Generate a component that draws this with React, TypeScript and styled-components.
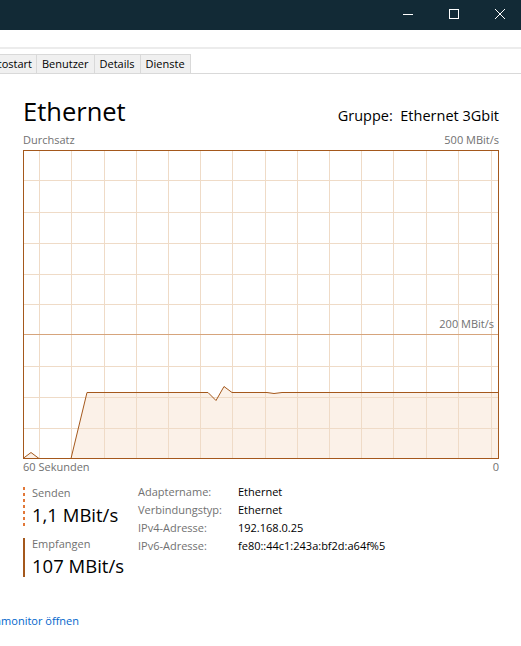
import React from "react";
import styled, { createGlobalStyle } from "styled-components";

const GlobalStyle = createGlobalStyle`
  html, body { margin: 0; padding: 0; background: #ffffff; }
  body {
    font-family: "Open Sans", "Noto Sans", sans-serif;
    overflow: hidden;
    width: 521px;
    height: 646px;
  }
  #root { width: 521px; height: 646px; }
`;

const LABEL = "#717171";
const BROWN = "#a4581c";
const GRID = "#efdbc7";

const Window = styled.div`
  width: 521px;
  height: 646px;
  display: flex;
  flex-direction: column;
  background: #ffffff;
  overflow: hidden;
`;

const TitleBar = styled.div`
  height: 30px;
  flex-shrink: 0;
  background: #122a36;
  display: flex;
  justify-content: flex-end;
`;

const Controls = styled.div`
  display: flex;
  margin-right: -2px;
`;

const CtrlButton = styled.div`
  width: 46px;
  height: 30px;
  display: flex;
  align-items: center;
  justify-content: center;
  svg { display: block; margin-bottom: 2px; }
`;

const MenuSpace = styled.div`
  height: 17px;
  flex-shrink: 0;
`;

const Separator = styled.div`
  height: 2px;
  flex-shrink: 0;
  background: #ececec;
  margin-bottom: 5px;
`;

const TabRow = styled.div`
  height: 20px;
  flex-shrink: 0;
  box-sizing: border-box;
  border-bottom: 1px solid #d9d9d9;
  display: flex;
`;

const ClipStart = styled.div<{ $w: number }>`
  width: ${(p) => p.$w}px;
  flex-shrink: 0;
  display: flex;
  justify-content: flex-end;
  white-space: nowrap;
`;

const Tab = styled.div<{ $pr?: number }>`
  height: 19px;
  box-sizing: border-box;
  flex-shrink: 0;
  background: #f0f0f0;
  border-top: 1px solid #d9d9d9;
  border-right: 1px solid #d9d9d9;
  padding: 0 ${(p) => p.$pr ?? 5}px 0 5px;
  font-size: 11px;
  line-height: 18px;
  color: #000;
  white-space: nowrap;
`;

const Content = styled.div`
  padding: 0 22px 0 23px;
  display: flex;
  flex-direction: column;
`;

const Header = styled.div`
  margin-top: 19px;
  height: 36px;
  display: flex;
  justify-content: space-between;
  align-items: baseline;
`;

const Title = styled.div`
  font-size: 25.5px;
  line-height: 36px;
  font-weight: 400;
  color: #000;
`;

const Group = styled.div`
  font-size: 14.5px;
  line-height: 20px;
  color: #000;
  white-space: pre;
`;

const AxisRow = styled.div<{ $top: number; $lh: number }>`
  margin-top: ${(p) => p.$top}px;
  display: flex;
  justify-content: space-between;
  font-size: 11px;
  line-height: ${(p) => p.$lh}px;
  color: ${LABEL};
`;

const Chart = styled.div`
  margin-top: 4px;
  position: relative;
  height: 309px;
  svg { display: block; }
`;

const ChartLabel = styled.span`
  position: absolute;
  right: 5px;
  top: 168px;
  font-size: 11px;
  line-height: 12px;
  color: ${LABEL};
`;

const Info = styled.div`
  margin-top: 9px;
  display: flex;
`;

const Stats = styled.div`
  width: 115px;
  flex-shrink: 0;
  padding-top: 4px;
  display: flex;
  flex-direction: column;
  gap: 12px;
`;

const StatBlock = styled.div<{ $dotted?: boolean }>`
  padding-left: 9px;
  ${(p) =>
    p.$dotted
      ? `background: repeating-linear-gradient(to bottom, #e27838 0 3px, transparent 3px 6px) left top / 2px 100% no-repeat;`
      : `border-left: 2px solid ${BROWN}; padding-left: 7px;`}
`;

const StatLabel = styled.div`
  font-size: 11px;
  line-height: 12px;
  color: ${LABEL};
`;

const StatValue = styled.div`
  margin-top: 5px;
  font-size: 18.5px;
  line-height: 22px;
  color: #000;
  white-space: nowrap;
`;

const Details = styled.div`
  display: grid;
  grid-template-columns: 100px auto;
  grid-auto-rows: 18px;
  font-size: 11px;
  line-height: 18px;
`;

const DLabel = styled.div`
  color: ${LABEL};
  white-space: nowrap;
`;

const DValue = styled.div`
  color: #000;
  white-space: nowrap;
`;

const LinkRow = styled.div`
  margin-top: 37px;
  width: 79px;
  display: flex;
  justify-content: flex-end;
  white-space: nowrap;
`;

const Link = styled.a`
  font-size: 11px;
  line-height: 14px;
  color: #0066cc;
  text-decoration: none;
  cursor: pointer;
`;

const vLines = [16, 48, 81, 113, 145, 177, 209, 242, 274, 306, 338, 370, 403, 435, 468];
const hLines = [30, 62, 93, 124, 154, 216, 247, 278];
const data: [number, number][] = [
  [0, 308], [8, 302], [16, 308], [48, 308], [64, 242], [185, 242], [193, 250],
  [201, 236], [209, 242], [244, 242], [251, 243], [259, 242], [476, 242],
];

const ThroughputChart: React.FC = () => {
  const pts = data.map(([x, y]) => `${x},${y + 0.5}`).join(" ");
  const fillPts = `${pts} 476,308 0,308`;
  return (
    <svg width={476} height={309} viewBox="0 0 476 309">
      <polygon points={fillPts} fill="#fbf1e8" />
      {vLines.map((x) => (
        <line key={"v" + x} x1={x + 0.5} y1={0} x2={x + 0.5} y2={309} stroke={GRID} strokeWidth={1} />
      ))}
      {hLines.map((y) => (
        <line key={"h" + y} x1={0} y1={y + 0.5} x2={476} y2={y + 0.5} stroke={GRID} strokeWidth={1} />
      ))}
      <line x1={0} y1={184.5} x2={476} y2={184.5} stroke="#d6a47c" strokeWidth={1} />
      <polyline points={pts} fill="none" stroke={BROWN} strokeWidth={1} />
      <rect x={0.5} y={0.5} width={475} height={308} fill="none" stroke={BROWN} strokeWidth={1} />
    </svg>
  );
};

export default function App() {
  return (
    <Window>
      <GlobalStyle />
      <TitleBar>
        <Controls>
          <CtrlButton>
            <svg width="10" height="10" viewBox="0 0 10 10">
              <line x1="0" y1="5.5" x2="10" y2="5.5" stroke="#fff" strokeWidth="1" />
            </svg>
          </CtrlButton>
          <CtrlButton>
            <svg width="10" height="10" viewBox="0 0 10 10">
              <rect x="0.5" y="0.5" width="9" height="9" fill="none" stroke="#fff" strokeWidth="1" />
            </svg>
          </CtrlButton>
          <CtrlButton>
            <svg width="10" height="10" viewBox="0 0 10 10">
              <path d="M0 0 L10 10 M10 0 L0 10" stroke="#fff" strokeWidth="1" />
            </svg>
          </CtrlButton>
        </Controls>
      </TitleBar>
      <MenuSpace />
      <Separator />
      <TabRow>
        <ClipStart $w={37}>
          <Tab $pr={4}>Autostart</Tab>
        </ClipStart>
        <Tab>Benutzer</Tab>
        <Tab>Details</Tab>
        <Tab>Dienste</Tab>
      </TabRow>
      <Content>
        <Header>
          <Title>Ethernet</Title>
          <Group>{"Gruppe:  Ethernet 3Gbit"}</Group>
        </Header>
        <AxisRow $top={5} $lh={12}>
          <span>Durchsatz</span>
          <span>500 MBit/s</span>
        </AxisRow>
        <Chart>
          <ThroughputChart />
          <ChartLabel>200 MBit/s</ChartLabel>
        </Chart>
        <AxisRow $top={1} $lh={14}>
          <span>60 Sekunden</span>
          <span>0</span>
        </AxisRow>
        <Info>
          <Stats>
            <StatBlock $dotted>
              <StatLabel>Senden</StatLabel>
              <StatValue>1,1 MBit/s</StatValue>
            </StatBlock>
            <StatBlock>
              <StatLabel>Empfangen</StatLabel>
              <StatValue>107 MBit/s</StatValue>
            </StatBlock>
          </Stats>
          <Details>
            <DLabel>Adaptername:</DLabel>
            <DValue>Ethernet</DValue>
            <DLabel>Verbindungstyp:</DLabel>
            <DValue>Ethernet</DValue>
            <DLabel>IPv4-Adresse:</DLabel>
            <DValue>192.168.0.25</DValue>
            <DLabel>IPv6-Adresse:</DLabel>
            <DValue>fe80::44c1:243a:bf2d:a64f%5</DValue>
          </Details>
        </Info>
      </Content>
      <LinkRow>
        <Link>Ressourcenmonitor öffnen</Link>
      </LinkRow>
    </Window>
  );
}
